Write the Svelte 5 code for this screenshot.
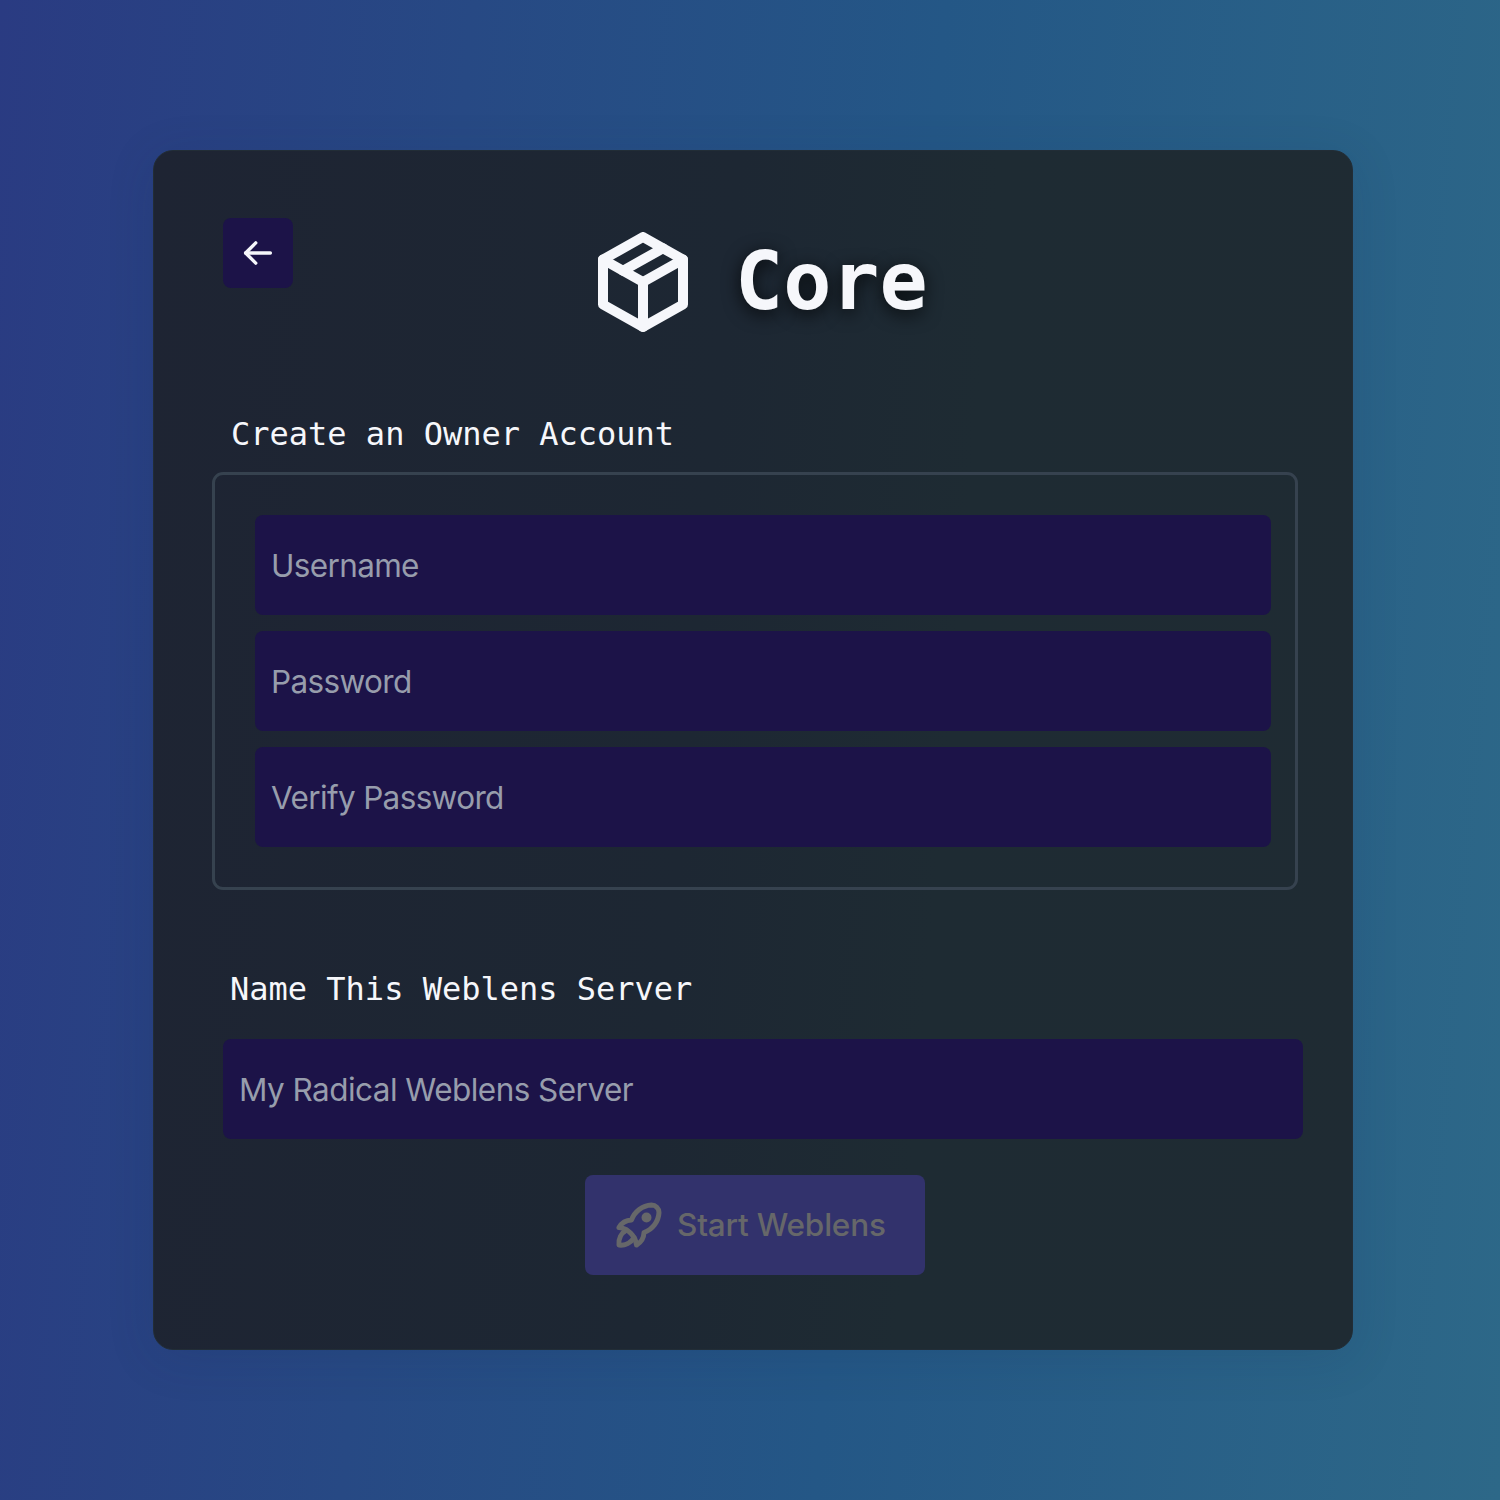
<script>
  const accountFields = [
    { placeholder: 'Username', type: 'text', key: 'username' },
    { placeholder: 'Password', type: 'password', key: 'password' },
    { placeholder: 'Verify Password', type: 'password', key: 'verify' }
  ];

  let values = $state({ username: '', password: '', verify: '', server: '' });
  let ready = $derived(
    values.username !== '' &&
      values.password !== '' &&
      values.password === values.verify &&
      values.server !== ''
  );
</script>

<main class="page">
  <section class="card">
    <header class="header">
      <button class="back" aria-label="Back">
        <svg width="36" height="36" viewBox="0 0 256 256" class="stroke-bold">
          <path d="M216 128H40" />
          <path d="M112 56L40 128L112 200" />
        </svg>
      </button>
      <div class="brand">
        <svg width="120" height="120" viewBox="0 0 24 24" class="stroke">
          <path d="M12 3l8 4.5v9l-8 4.5l-8 -4.5v-9l8 -4.5" />
          <path d="M12 12l8 -4.5" />
          <path d="M12 12v9" />
          <path d="M12 12l-8 -4.5" />
          <path d="M16 5.25l-8 4.5" />
        </svg>
        <h1>Core</h1>
      </div>
    </header>

    <p class="label owner">Create an Owner Account</p>
    <div class="group">
      {#each accountFields as field (field.key)}
        <input type={field.type} placeholder={field.placeholder} bind:value={values[field.key]} />
      {/each}
    </div>

    <p class="label server">Name This Weblens Server</p>
    <input class="server-input" placeholder="My Radical Weblens Server" bind:value={values.server} />

    <button class="start" disabled={!ready}>
      <svg width="60" height="60" viewBox="0 0 24 24" class="stroke">
        <path d="M4 13a8 8 0 0 1 7 7a6 6 0 0 0 3 -5a9 9 0 0 0 6 -8a3 3 0 0 0 -3 -3a9 9 0 0 0 -8 6a6 6 0 0 0 -5 3" />
        <path d="M7 14a6 6 0 0 0 -3 6a6 6 0 0 0 6 -3" />
        <circle cx="15" cy="9" r="1" />
      </svg>
      <span>Start Weblens</span>
    </button>
  </section>
</main>

<style>
  :global(body) {
    margin: 0;
  }

  .page {
    box-sizing: border-box;
    width: 1500px;
    height: 1500px;
    padding: 150px 147px 150px 153px;
    background: linear-gradient(95deg, #2a3b82 0%, #245786 58%, #2d6888 100%);
    overflow: hidden;
  }

  .card {
    box-sizing: border-box;
    display: flex;
    flex-direction: column;
    width: 1200px;
    height: 1200px;
    padding: 67px 49px 0 58px;
    border: 1px solid #222d36;
    border-radius: 20px;
    background: linear-gradient(95deg, #1e2433 0%, #1d2733 45%, #1e2b33 65%, #1f2b33 100%);
    box-shadow: 0 8px 48px rgba(20, 40, 80, 0.14);
  }

  svg {
    display: block;
    flex: none;
    fill: none;
    stroke: currentColor;
    stroke-linecap: round;
    stroke-linejoin: round;
  }

  .stroke {
    stroke-width: 2;
  }

  .stroke-bold {
    stroke-width: 24;
  }

  .header {
    display: flex;
    align-items: flex-start;
    height: 196px;
    padding-left: 11px;
    color: #f6f7fb;
  }

  .back {
    display: grid;
    place-items: center;
    width: 70px;
    height: 70px;
    padding: 0;
    border: 0;
    border-radius: 8px;
    color: inherit;
    background: #1c1348;
  }

  .brand {
    display: flex;
    align-items: center;
    gap: 32px;
    height: 120px;
    margin: 4px 0 0 290px;
  }

  h1 {
    margin: 0;
    font: bold 80px/120px 'DejaVu Sans Mono', monospace;
    text-shadow: 0 4px 18px rgba(0, 0, 0, 0.8);
  }

  .label {
    margin: 0;
    color: #f6f7fb;
    font: 32px/40px 'DejaVu Sans Mono', monospace;
  }

  .owner {
    padding-left: 19px;
  }

  .group {
    box-sizing: border-box;
    display: flex;
    flex-direction: column;
    gap: 16px;
    width: 1086px;
    height: 418px;
    margin-top: 18px;
    padding: 40px 24px 0 40px;
    border: 3px solid #36424f;
    border-radius: 11px;
  }

  input {
    box-sizing: border-box;
    width: 100%;
    height: 100px;
    padding: 0 16px;
    border: 0;
    border-radius: 8px;
    outline: 0;
    color: #f6f7fb;
    background: #1c1348;
    font: 31.5px Inter, sans-serif;
    letter-spacing: -0.65px;
  }

  input::placeholder {
    color: #979dac;
    opacity: 1;
  }

  .server {
    margin-top: 79px;
    padding-left: 18px;
  }

  .server-input {
    width: 1080px;
    flex: none;
    margin: 30px 0 0 11px;
    letter-spacing: -0.55px;
  }

  .start {
    display: flex;
    align-items: center;
    gap: 8px;
    width: 340px;
    height: 100px;
    margin: 36px 0 0 373px;
    padding: 0 0 0 24px;
    border: 0;
    border-radius: 8px;
    color: #666769;
    background: #32326c;
    font: 500 31.5px Inter, sans-serif;
    letter-spacing: -0.2px;
  }

  .start span {
    padding-bottom: 2px;
  }
</style>
